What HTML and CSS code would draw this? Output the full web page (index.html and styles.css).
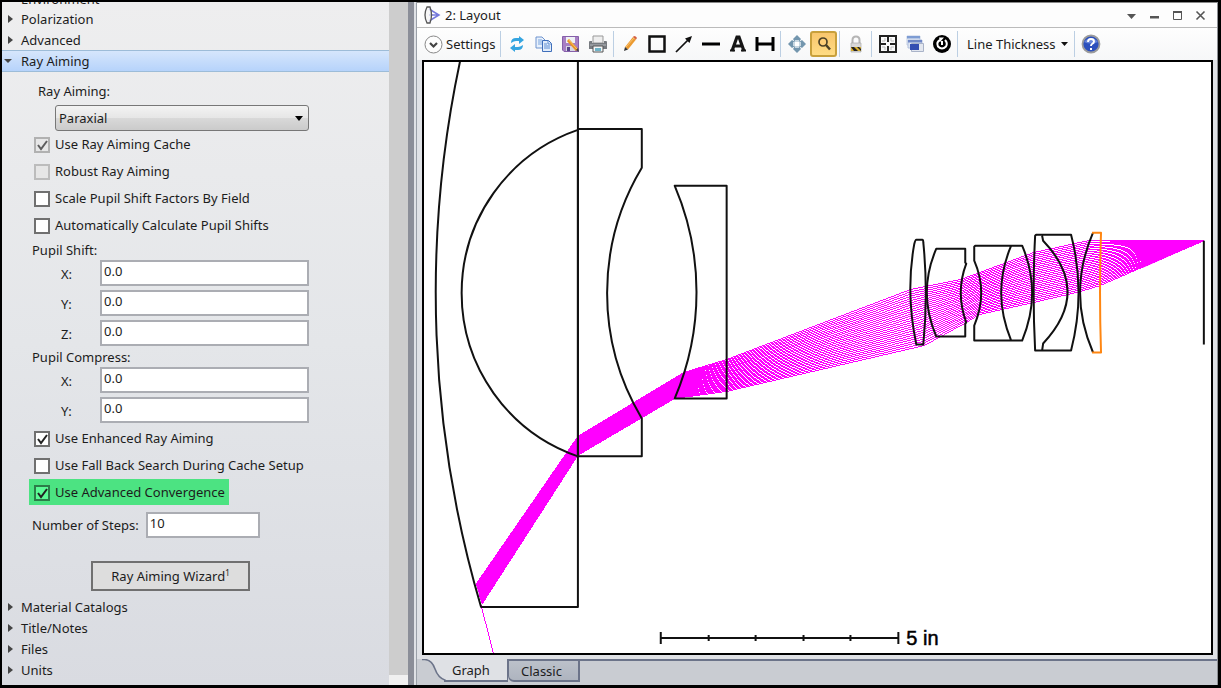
FILE: index.html
```html
<!DOCTYPE html>
<html lang="en">
<head>
  <meta charset="utf-8">
  <title>2: Layout</title>
  <link rel="stylesheet" href="styles.css">
</head>
<body>
<div class="app">
  <div class="explorer">
    <div class="tree">
      <div class="tree-item clipped">Environment</div>
      <div class="tree-item"><span class="arrow"></span>Polarization</div>
      <div class="tree-item"><span class="arrow"></span>Advanced</div>
      <div class="tree-item selected"><span class="arrow open"></span>Ray Aiming</div>
      <form class="settings">
        <label class="mode-label" for="mode">Ray Aiming:</label>
        <div class="select-box">
          <select id="mode"><option>Paraxial</option></select>
        </div>
        <div class="checks">
          <label class="check"><input type="checkbox" checked disabled>Use Ray Aiming Cache</label>
          <label class="check"><input type="checkbox" disabled>Robust Ray Aiming</label>
          <label class="check"><input type="checkbox">Scale Pupil Shift Factors By Field</label>
          <label class="check"><input type="checkbox">Automatically Calculate Pupil Shifts</label>
        </div>
        <div class="group-title">Pupil Shift:</div>
        <div class="fields">
          <label for="sx">X:</label><input type="text" id="sx" value="0.0">
          <label for="sy">Y:</label><input type="text" id="sy" value="0.0">
          <label for="sz">Z:</label><input type="text" id="sz" value="0.0">
        </div>
        <div class="group-title">Pupil Compress:</div>
        <div class="fields">
          <label for="cx">X:</label><input type="text" id="cx" value="0.0">
          <label for="cy">Y:</label><input type="text" id="cy" value="0.0">
        </div>
        <div class="checks lower">
          <label class="check"><input type="checkbox" checked>Use Enhanced Ray Aiming</label>
          <label class="check"><input type="checkbox">Use Fall Back Search During Cache Setup</label>
          <label class="check marked"><input type="checkbox" checked>Use Advanced Convergence</label>
        </div>
        <div class="steps">
          <label for="steps">Number of Steps:</label><input type="text" id="steps" value="10">
        </div>
        <button type="button" class="wizard">Ray Aiming Wizard<sup>1</sup></button>
      </form>
      <div class="tree-item"><span class="arrow"></span>Material Catalogs</div>
      <div class="tree-item"><span class="arrow"></span>Title/Notes</div>
      <div class="tree-item"><span class="arrow"></span>Files</div>
      <div class="tree-item"><span class="arrow"></span>Units</div>
    </div>
    <div class="scrollbar"><div class="thumb"></div></div>
  </div>
  <div class="splitter"></div>

  <div class="window">
    <div class="titlebar">
      <svg class="logo" width="17" height="18" viewBox="0 0 17 18"><path d="M5 3L15 9L5 15M5 9H15" fill="none" stroke="#7478dc" stroke-width="1.5"/><path d="M3 1h3q3 8 0 16H3Q-1 9 3 1z" fill="#f4f4f4" fill-opacity=".7" stroke="#555" stroke-width="1.3"/></svg>
      <span class="title">2: Layout</span>
      <button class="win-btn" aria-label="Menu"><svg width="11" height="11" viewBox="0 0 11 11"><path d="M1 4h9L5.500 9z" fill="#555"/></svg></button>
      <button class="win-btn" aria-label="Minimize"><svg width="11" height="11" viewBox="0 0 11 11"><path d="M1 6h9v2.500H1z" fill="#555"/></svg></button>
      <button class="win-btn" aria-label="Maximize"><svg width="11" height="11" viewBox="0 0 11 11"><path d="M1.500 2v7.500h8V2" fill="none" stroke="#555"/><path d="M1 1h9v2H1z" fill="#555"/></svg></button>
      <button class="win-btn" aria-label="Close"><svg width="11" height="11" viewBox="0 0 11 11"><path d="M1.500 1.500l8 8M9.500 1.500l-8 8" stroke="#555" stroke-width="1.600"/></svg></button>
    </div>
    <div class="toolbar">
      <button class="text-btn settings-btn">
        <svg width="19" height="19" viewBox="0 0 19 19"><circle cx="9.500" cy="9.500" r="8.500" fill="#fdfdfd" stroke="#888"/><path d="M6 8l3.500 3.500L13 8" fill="none" stroke="#444" stroke-width="2.200"/></svg>Settings</button>
      <span class="sep"></span>
      <button class="tool" aria-label="Update"><svg width="18" height="18" viewBox="0 0 18 18"><path d="M3 8Q3 3 8 3h3V1l5 4-5 4V6H8Q6 6 3 8z" fill="#35a5e0"/><path d="M15 10q0 5-5 5H7v2l-5-4 5-4v3h3q2 0 5-2z" fill="#35a5e0"/></svg></button>
      <button class="tool" aria-label="Copy"><svg width="18" height="18" viewBox="0 0 18 18"><path d="M1 2h6l3 3v8H1z" fill="#e8f1fc" stroke="#6f94cf"/><path d="M3 5h4M3 7h4M3 9h4" stroke="#79a4de"/><path d="M7.500 5.500h6l3 3v8h-9z" fill="#e2edfb" stroke="#3f6fba"/><path d="M13 6v3h3M9 9h3M9 11h6M9 13h6" fill="none" stroke="#5e8fd4"/></svg></button>
      <button class="tool" aria-label="Save"><svg width="18" height="18" viewBox="0 0 18 18"><path d="M.5 1.500h16v15H2l-1.500-1.500z" fill="#a87fc4" stroke="#8660aa"/><path d="M4 2h9v6H4z" fill="#eef1f6"/><path d="M4 11h9v5H4z" fill="#d6d6e2"/><path d="M5 12h3v4H5z" fill="#58458a"/><path d="M6 5l9 10" stroke="#e99327" stroke-width="3"/><path d="M6 4l9 10" stroke="#f9c766"/><path d="M14 15l2-2 1 4z" fill="#444"/></svg></button>
      <button class="tool" aria-label="Print"><svg width="20" height="18" viewBox="0 0 20 18"><path d="M5 1h10v7H5z" fill="#eee" stroke="#999"/><path d="M1 7q0-1 1-1h2v2h12V6h2q1 0 1 1v7H1z" fill="#777b80"/><path d="M2 10h16" stroke="#b5b9bd"/><path d="M5 11h10v6H5z" fill="#f4f6f7" stroke="#555"/><path d="M7 13h6v3H7z" fill="#6fb4c8"/></svg></button>
      <span class="sep"></span>
      <button class="tool" aria-label="Draw"><svg width="18" height="18" viewBox="0 0 18 18"><path d="M4 12L12 2l3 2.500-8 10z" fill="#eb9a31"/><path d="M5 12l8-9" stroke="#fac36f"/><path d="M12 2l1-1q2 0 3 2l-1 1.500z" fill="#d45f43"/><path d="M4 12l3 2.500L3 16z" fill="#333"/></svg></button>
      <button class="tool" aria-label="Rectangle"><svg width="18" height="18" viewBox="0 0 18 18"><path d="M1.500 1.500h15v15h-15z" fill="none" stroke="#111" stroke-width="2.500"/></svg></button>
      <button class="tool" aria-label="Arrow"><svg width="18" height="18" viewBox="0 0 18 18"><path d="M1 17L13 5" stroke="#111" stroke-width="1.700"/><path d="M17 1l-7 2.500L14.500 8z" fill="#111"/></svg></button>
      <button class="tool" aria-label="Line"><svg width="18" height="18" viewBox="0 0 18 18"><path d="M0 7.500h18v3H0z" fill="#000"/></svg></button>
      <button class="tool" aria-label="Text"><svg width="18" height="18" viewBox="0 0 18 18"><path d="M3 16L8 2h2l5 14M5 11h8" fill="none" stroke="#161616" stroke-width="3.200"/><path d="M1 15.500h5M12 15.500h5" stroke="#161616" stroke-width="2"/></svg></button>
      <button class="tool" aria-label="Dimension"><svg width="20" height="18" viewBox="0 0 20 18"><path d="M2 2v14M18 2v14M2 9h16" stroke="#000" stroke-width="3"/></svg></button>
      <span class="sep"></span>
      <button class="tool" aria-label="Pan"><svg width="18" height="18" viewBox="0 0 18 18"><path d="M9 0l4 4-2 3H7L5 4zM9 18l4-4-2-3H7l-2 3zM0 9l4-4 3 2v4l-3 2zM18 9l-4-4-3 2v4l3 2z" fill="#7396ae"/><path d="M7 5h4v2H7zM7 11h4v2H7zM5 7h2v4H5zM11 7h2v4h-2z" fill="#c9d8e2"/><path d="M7 7h4v4H7z" fill="#fff"/></svg></button>
      <button class="tool active" aria-label="Zoom"><svg width="18" height="18" viewBox="0 0 18 18"><circle cx="8" cy="7" r="4" fill="#ffcf78" stroke="#4d4227" stroke-width="1.700"/><path d="M11 10l4 4.500" stroke="#4d4227" stroke-width="2.500"/></svg></button>
      <span class="sep"></span>
      <button class="tool" aria-label="Lock"><svg width="18" height="18" viewBox="0 0 18 18"><path d="M5.500 9V5q0-3.500 3.500-3.500T12.500 5v4" fill="none" stroke="#b5b5b5" stroke-width="2"/><path d="M4 8h10v9H4z" fill="#d9d9d9" stroke="#aaa" stroke-width=".7"/><path d="M4 12h10v4H4z" fill="#d9b030"/><path d="M4 12h3l4 4H7zM10 12h2l2 2v2z" fill="#222"/></svg></button>
      <span class="sep"></span>
      <button class="tool" aria-label="Fit"><svg width="20" height="20" viewBox="0 0 20 20"><path d="M2 2h16v16H2zM10 2v6M10 12v6M2 10h6M12 10h6" fill="none" stroke="#222" stroke-width="2"/><path d="M7 4v3H4M13 4v3h3M7 16v-3H4M13 16v-3h3" fill="none" stroke="#bbb"/></svg></button>
      <button class="tool wide" aria-label="Windows"><svg width="18" height="18" viewBox="0 0 18 18"><path d="M1 1h13v9H1z" fill="#edf2fa" stroke="#c3cfe4"/><path d="M1 1h13v2.500H1z" fill="#7d9cd3"/><path d="M2 5h14v8H2z" fill="#dfe7f4" stroke="#b3c1dd"/><path d="M2 5h14v2.500H2z" fill="#7088c6"/><path d="M5.500 8.500h12v8h-12z" fill="#e3e7ef" stroke="#a9b3c8"/><path d="M4 9h9v6H4z" fill="#344eb1"/></svg></button>
      <button class="tool" aria-label="Reset"><svg width="20" height="20" viewBox="0 0 20 20"><circle cx="10" cy="10" r="9" fill="#000"/><path d="M13 6q3 3 1 6.500-4 4-8 0Q4 8 8 6" fill="none" stroke="#fff" stroke-width="2"/><path d="M7 3.500h5L8 8zM9 7h2v4H9z" fill="#fff"/></svg></button>
      <span class="sep"></span>
      <button class="text-btn thickness">Line Thickness<svg width="7" height="5" viewBox="0 0 7 5"><path d="M0 0h7L3.500 4z" fill="#111"/></svg></button>
      <span class="sep"></span>
      <button class="tool help" aria-label="Help"><svg width="20" height="20" viewBox="0 0 20 20"><circle cx="10" cy="10" r="8.500" fill="#2c50bd" stroke="#9b9b9b" stroke-width="1.800"/><path d="M3 8q7-8 14 0-7 3-14 0z" fill="#6685da"/><path d="M7 8q0-3 3-3t3 2.500q0 1.500-2 2.500-1 .6-1 2" fill="none" stroke="#fff" stroke-width="1.900"/><path d="M9 14h2v2H9z" fill="#fff"/></svg></button>
    </div>

    <div class="canvas">
      <svg class="drawing" viewBox="423 61 788 592" role="img" aria-label="Lens layout">
        <path class="ray-fill" d="M475 584L577 436L683 372L674 398L577 455L481 604z"/>
        <g id="rays" class="rays"></g>
        <path class="ray-fill" d="M1110 240H1204L1143 267Q1139 242 1110 242z"/>
        <path class="rays" d="M480 605L493 656"/>
        <g class="lens">
          <path d="M459 60A1115 1115 0 0 0 480 607H577V60"/>
          <path d="M577 129A173 173 0 0 0 577 456H641V418A244 244 0 0 1 641 167V128H577V456"/>
          <path d="M674 185H726V398H674A271 271 0 0 0 674 185z"/>
          <path d="M916 239H922Q923 239 923 242Q928 292 923 344H916Q905 292 914 243Q915 239 916 239z"/>
          <path d="M936 248H965V262L966 263Q955 292 966 322L965 323V336H936Q917 292 936 248z"/>
          <path d="M975 245H1022Q1042 292 1022 340H974V325Q988 292 974 260V246zM1011 245Q991 292 1011 340"/>
          <path d="M1036 234H1071Q1086 292 1071 350H1035Q1032 292 1035 235zM1042 235L1043 240Q1092 291 1043 343L1042 350"/>
          <path d="M1093 232Q1067 292 1093 352"/>
          <path class="focused" d="M1092 232H1101Q1099 292 1101 352H1092"/>
          <path d="M1204 240V344"/>
        </g>
        <path class="scale" d="M660 638H898M660 632V644M898 632V644M708 635V641M755 635V641M803 635V641M850 635V641"/>
        <text class="scale-text" x="906" y="645">5 in</text>
      </svg>
    </div>
    <div class="tabs">
      <button class="tab current"><svg width="24" height="22" viewBox="0 0 24 22"><path d="M0 0H4Q11 1 14 10T24 21.500V0z" fill="#dfe1e5" stroke="none"/><path d="M0 .5H3Q10 1 13 10T24 21.500" fill="none" stroke="#6b7389" stroke-width="1.500"/></svg><span>Graph</span></button>
      <button class="tab">Classic</button>
      <span class="tab-line"></span>
    </div>
  </div>
</div>
<script src="rays.js"></script>
</body>
</html>
```
FILE: styles.css
```css
* {
  box-sizing: border-box;
}
body {
  margin: 0;
  font-family: "Noto Sans", "Open Sans", sans-serif;
  font-size: 13px;
  color: #1c1c1c;
}
button, input, select {
  font: inherit;
  color: inherit;
}
button {
  padding: 0;
  border: 0;
  background: none;
}
.app {
  display: flex;
  height: 100vh;
  overflow: hidden;
  border: 2px solid #000;
  border-width: 2px 3px 3px 2px;
  background: #dfe1e5;
}

/* left panel */
.explorer {
  display: flex;
  width: 406px;
  flex: none;
}
.tree {
  flex: 1;
  overflow: hidden;
  background: linear-gradient(#eeeeef, #e4e6e9 50%, #d9dbe1);
}
.tree-item {
  display: flex;
  align-items: center;
  height: 21px;
  padding-left: 6px;
}
.tree-item.clipped {
  height: 6px;
  padding-left: 19px;
  align-items: flex-end;
  overflow: hidden;
}
.tree-item.selected {
  height: 22px;
  padding-left: 2px;
  border: 1px solid #9dbcd8;
  border-width: 1px 0;
  background: linear-gradient(#d6e6fc, #b6d3fb);
}
.arrow {
  width: 5px;
  margin-right: 8px;
  border: 4px solid transparent;
  border-width: 4px 0 4px 5px;
  border-left-color: #444;
}
.arrow.open {
  width: 8px;
  margin-right: 9px;
  border-width: 4px 4px 0;
  border-color: #444 transparent transparent;
}
.settings {
  display: flex;
  flex-direction: column;
  align-items: flex-start;
  padding: 9px 0 5px 30px;
}
.mode-label {
  height: 24px;
  margin-left: 6px;
  line-height: 20px;
}
.select-box {
  position: relative;
  margin-left: 23px;
}
.select-box::after {
  content: "";
  position: absolute;
  top: 11px;
  right: 6px;
  border: 4px solid transparent;
  border-width: 5px 4px 0;
  border-top-color: #000;
}
select {
  display: block;
  width: 254px;
  height: 26px;
  padding: 0 3px;
  appearance: none;
  border: 1px solid #777;
  border-radius: 3px;
  background: linear-gradient(#f3f3f3, #e6e6e6 50%, #d9d9d9 50%, #cbcbcb);
}
.checks.lower {
  margin-top: 2px;
}
.check {
  display: flex;
  align-items: center;
  width: fit-content;
  height: 26px;
  margin-bottom: 1px;
  gap: 5px;
}
.check input {
  width: 16px;
  height: 16px;
  margin: 2px 0 0 2px;
  appearance: none;
  border: 2px solid #707070;
  background: #fff;
}
.check input:checked {
  background: #fff url("data:image/svg+xml,%3Csvg xmlns='http://www.w3.org/2000/svg' viewBox='0 0 12 12'%3E%3Cpath d='M2 6l3 4 6-8' fill='none' stroke='%23222' stroke-width='2'/%3E%3C/svg%3E");
}
.check input:disabled {
  border-color: #bcbcbc;
  background-color: #e6e6e6;
}
.check input:disabled:checked {
  opacity: .7;
  border-color: #999;
}
.check.marked {
  margin-left: -3px;
  padding: 0 4px 0 3px;
  background: #4ce382;
}
.check.marked input {
  border-color: #2c7c49;
  background-color: #5bfb96;
}
.group-title {
  height: 18px;
  line-height: 18px;
  margin: 2px 0 1px;
}
.fields {
  display: grid;
  grid-template-columns: 39px 209px;
  row-gap: 4px;
  margin-left: 29px;
  align-items: center;
}
input[type="text"] {
  height: 26px;
  padding: 0 2px 5px;
  border: 2px solid #abadb3;
  background: #fff;
}
.fields label {
  padding-top: 2px;
}
.steps {
  display: flex;
  align-items: center;
  gap: 7px;
  margin-top: 6px;
}
.steps input {
  width: 114px;
}
.wizard {
  width: 159px;
  height: 30px;
  margin: 23px 0 0 59px;
  border: 2px solid #707070;
  background: #ddd;
}
.wizard sup {
  font-size: 8px;
  line-height: 0;
}
.scrollbar {
  display: flex;
  flex-direction: column;
  width: 19px;
  padding-bottom: 10px;
  background: #f0f0f0;
}
.thumb {
  flex: 1;
  background: #cdcdcd;
}
.splitter {
  flex: none;
  width: 6px;
  margin-right: 2px;
  background: #8b8e98;
}

/* layout window */
.window {
  display: flex;
  flex: 1;
  flex-direction: column;
  min-width: 0;
  border-left: 1px solid #9aa0a8;
  border-right: 1px solid #8d9095;
}
.titlebar {
  display: flex;
  align-items: center;
  height: 26px;
  padding: 0 5px 0 7px;
  border-top: 1px solid #888;
  border-bottom: 1px solid #bbb;
  background: #fdfdfd;
}
.title {
  flex: 1;
  margin-left: 4px;
}
.win-btn {
  width: 23px;
  height: 20px;
}
.win-btn svg, .tool svg {
  display: block;
  margin: auto;
}
.toolbar {
  display: flex;
  align-items: center;
  height: 32px;
  padding-left: 7px;
  background: linear-gradient(#fefefe, #f6f7f8);
}
.sep {
  width: 1px;
  height: 26px;
  margin: 0 2px;
  background: #bccfe3;
}
.text-btn {
  display: flex;
  align-items: center;
  white-space: nowrap;
}
.settings-btn {
  gap: 3px;
  width: 74px;
}
.thickness {
  gap: 5px;
  width: 112px;
  padding-left: 7px;
}
.tool {
  width: 27px;
  height: 26px;
}
.tool.active {
  border: 2px solid #c8a03c;
  border-radius: 3px;
  background: linear-gradient(#f8c66d, #ffdc84);
}
.canvas {
  flex: 1;
  min-height: 0;
  margin: 0 4px 4px 5px;
  border: 2px solid #000;
  background: #fff;
}
.drawing {
  display: block;
  width: 100%;
  height: 100%;
}
.lens {
  fill: none;
  stroke: #111;
  stroke-width: 2;
  stroke-linejoin: round;
}
.lens .focused {
  stroke: #ff8611;
}
.rays {
  fill: none;
  stroke: #f0f;
  stroke-width: 1;
  shape-rendering: crispEdges;
}
.ray-fill {
  fill: #f0f;
}
.scale {
  fill: none;
  stroke: #111;
  stroke-width: 2;
}
.scale-text {
  font-family: "Liberation Sans", sans-serif;
  font-size: 20px;
  fill: #000;
  stroke: #000;
  stroke-width: .5;
}

/* bottom tabs */
.tabs {
  display: flex;
  height: 26px;
  padding-bottom: 3px;
  background: #c9ccd2;
}
.tab {
  width: 72px;
  padding-right: 4px;
  border: 2px solid #6b7389;
  border-width: 2px 2px 2px 1px;
  border-bottom-left-radius: 6px;
  background: linear-gradient(#bcc1ca, #aeb4bf);
}
.tab.current {
  display: flex;
  align-items: center;
  width: 91px;
  padding: 0 0 0 5px;
  border-width: 0 1px 2px 0;
  border-image: linear-gradient(90deg, transparent 30%, #6b7389 30%) 1;
  background: linear-gradient(90deg, transparent 27px, #dfe1e5 27px);
}
.tab.current span {
  margin-left: 6px;
}
.tab-line {
  flex: 1;
  border-top: 2px solid #6b7389;
}
```
FILE: rays.js
```js
// upper and lower edge of the ray bundle at each surface
const upper = [[475, 584], [577, 436], [683, 372], [726, 359], [910, 289], [960, 279], [979, 272], [1033, 252], [1088, 240], [1100, 240], [1204, 240]];
const lower = [[481, 604], [577, 455], [674, 398], [726, 391], [924, 345], [966, 322], [979, 314], [1033, 302], [1080, 291], [1100, 285], [1204, 240]];
const count = 28;
const group = document.getElementById('rays');

for (let i = 0; i < count; i++) {
  const t = i / (count - 1);
  const points = upper.map((p, n) => {
    const q = lower[n];
    return (p[0] + (q[0] - p[0]) * t) + ',' + (p[1] + (q[1] - p[1]) * t);
  });
  const line = document.createElementNS('http://www.w3.org/2000/svg', 'polyline');
  line.setAttribute('points', points.join(' '));
  group.appendChild(line);
}
```
